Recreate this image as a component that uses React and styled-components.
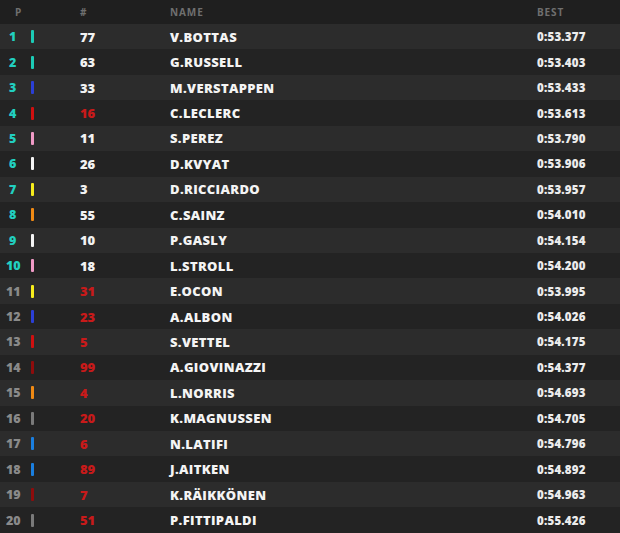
import React from "react";
import styled, { createGlobalStyle } from "styled-components";

const GlobalStyle = createGlobalStyle`
  html, body {
    margin: 0;
    padding: 0;
    background: #1f1f1f;
  }
  body {
    font-family: "Open Sans", "Liberation Sans", sans-serif;
  }
`;

const teams = {
  mercedes: "#1ccbb6",
  redbull: "#2b3fd6",
  ferrari: "#d01010",
  racingpoint: "#f09ac6",
  alphatauri: "#f4f4f4",
  renault: "#f6ec1c",
  mclaren: "#f08a14",
  alfa: "#8e0c0c",
  haas: "#7a7a7a",
  williams: "#1a7fe0",
};

const results = [
  { num: "77", name: "V.BOTTAS", team: "mercedes", best: "0:53.377" },
  { num: "63", name: "G.RUSSELL", team: "mercedes", best: "0:53.403" },
  { num: "33", name: "M.VERSTAPPEN", team: "redbull", best: "0:53.433" },
  { num: "16", name: "C.LECLERC", team: "ferrari", best: "0:53.613", red: true },
  { num: "11", name: "S.PEREZ", team: "racingpoint", best: "0:53.790" },
  { num: "26", name: "D.KVYAT", team: "alphatauri", best: "0:53.906" },
  { num: "3", name: "D.RICCIARDO", team: "renault", best: "0:53.957" },
  { num: "55", name: "C.SAINZ", team: "mclaren", best: "0:54.010" },
  { num: "10", name: "P.GASLY", team: "alphatauri", best: "0:54.154" },
  { num: "18", name: "L.STROLL", team: "racingpoint", best: "0:54.200" },
  { num: "31", name: "E.OCON", team: "renault", best: "0:53.995", red: true },
  { num: "23", name: "A.ALBON", team: "redbull", best: "0:54.026", red: true },
  { num: "5", name: "S.VETTEL", team: "ferrari", best: "0:54.175", red: true },
  { num: "99", name: "A.GIOVINAZZI", team: "alfa", best: "0:54.377", red: true },
  { num: "4", name: "L.NORRIS", team: "mclaren", best: "0:54.693", red: true },
  { num: "20", name: "K.MAGNUSSEN", team: "haas", best: "0:54.705", red: true },
  { num: "6", name: "N.LATIFI", team: "williams", best: "0:54.796", red: true },
  { num: "89", name: "J.AITKEN", team: "williams", best: "0:54.892", red: true },
  { num: "7", name: "K.RÄIKKÖNEN", team: "alfa", best: "0:54.963", red: true },
  { num: "51", name: "P.FITTIPALDI", team: "haas", best: "0:55.426", red: true },
];

const Table = styled.div`
  width: 620px;
  background: #1f1f1f;
`;

const Grid = styled.div`
  display: grid;
  grid-template-columns: 28px 52px 90px 1fr 83px;
  align-items: center;
`;

const Header = styled(Grid)`
  height: 24px;
  background: #1f1f1f;
  color: #6f6f6f;
  font-size: 10px;
  font-weight: 700;
  letter-spacing: 0.9px;
`;

const HeadCell = styled.div`
  padding-left: ${(p) => p.$pad || 0}px;
`;

const Row = styled(Grid)`
  height: 25.45px;
  background: ${(p) => (p.$odd ? "#2c2c2c" : "#232323")};
  font-weight: 800;
  font-size: 13px;
`;

const Pos = styled.div`
  padding-left: ${(p) => (p.$wide ? 6 : 9)}px;
  color: ${(p) => (p.$top ? "#22cfc0" : "#8a8a8a")};
  font-size: 12.5px;
`;

const TeamBar = styled.div`
  width: 3px;
  height: 13px;
  border-radius: 1px;
  background: ${(p) => p.$color};
  margin-left: 3px;
`;

const Num = styled.div`
  color: ${(p) => (p.$red ? "#c81a1a" : "#f2f2f2")};
`;

const Name = styled.div`
  color: #f4f4f4;
  letter-spacing: 0.35px;
`;

const Best = styled.div`
  color: #ececec;
  font-size: 11.5px;
  font-weight: 800;
  letter-spacing: 0.2px;
`;

export default function App() {
  return (
    <>
      <GlobalStyle />
      <Table>
        <Header>
          <HeadCell $pad={15}>P</HeadCell>
          <div />
          <HeadCell>#</HeadCell>
          <HeadCell>NAME</HeadCell>
          <HeadCell>BEST</HeadCell>
        </Header>
        {results.map((r, i) => (
          <Row key={r.name} $odd={i % 2 === 0}>
            <Pos $top={i < 10} $wide={i >= 9}>
              {i + 1}
            </Pos>
            <TeamBar $color={teams[r.team]} />
            <Num $red={r.red}>{r.num}</Num>
            <Name>{r.name}</Name>
            <Best>{r.best}</Best>
          </Row>
        ))}
      </Table>
    </>
  );
}
